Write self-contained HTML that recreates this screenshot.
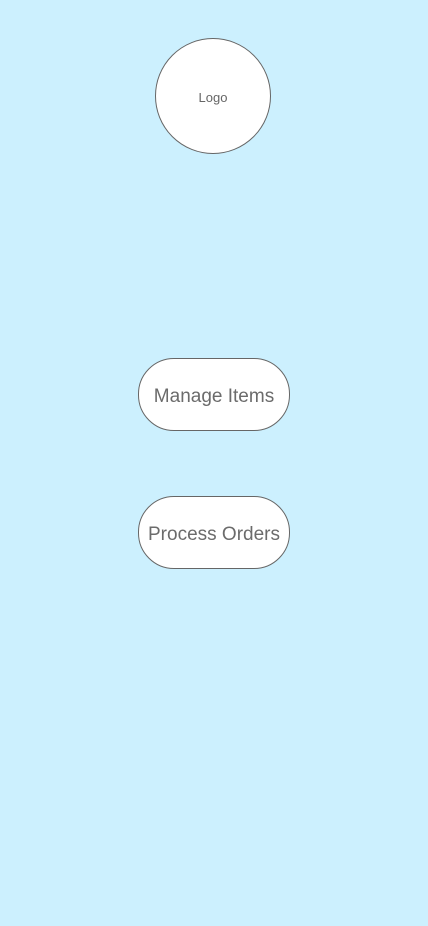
<!DOCTYPE html>
<html><head><style>
html,body{margin:0;padding:0;width:428px;height:926px;background:#ccf0fe;font-family:"Liberation Sans",sans-serif;overflow:hidden}
.logo{position:absolute;left:155px;top:38px;width:114px;height:114px;box-sizing:content-box;border:1px solid #666;border-radius:50%;background:#fff;display:flex;align-items:center;justify-content:center;font-size:13px;color:#666;padding-top:0}
.logo span{position:relative;top:1px}
.btn{position:absolute;left:138px;width:150px;height:71px;border:1px solid #666;border-radius:36px;background:#fff;display:flex;align-items:center;justify-content:center;font-size:19px;color:#6b6b6b}
.btn span{position:relative;top:2px}
</style></head><body>
<div class="logo"><span>Logo</span></div>
<div class="btn" style="top:358px"><span>Manage Items</span></div>
<div class="btn" style="top:496px"><span>Process Orders</span></div>
</body></html>
